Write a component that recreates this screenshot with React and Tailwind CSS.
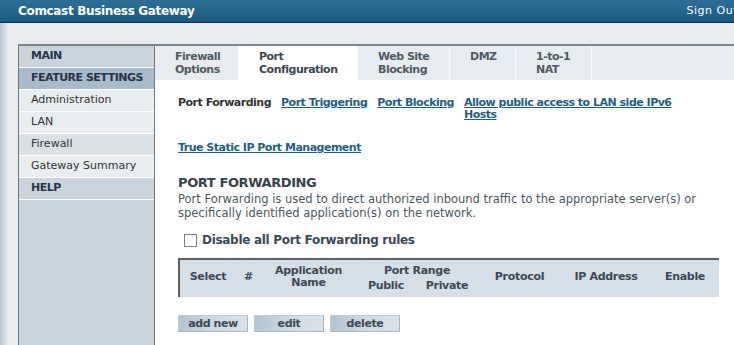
export default function App() {
  const sideRows = [
    { label: "MAIN", head: true, bg: "bg-[#c8d3db]" },
    { label: "FEATURE SETTINGS", head: true, bg: "bg-[#a8bbcb]" },
    { label: "Administration", bg: "bg-[#e8edf0]" },
    { label: "LAN", bg: "bg-[#e8edf0]" },
    { label: "Firewall", bg: "bg-[#d9e1e6]" },
    { label: "Gateway Summary", bg: "bg-[#e8edf0]" },
    { label: "HELP", head: true, bg: "bg-[#c8d3db]" },
  ];

  const tabs = [
    { a: "Firewall", b: "Options", w: "w-[84px]" },
    { a: "Port", b: "Configuration", w: "w-[119px]", active: true },
    { a: "Web Site", b: "Blocking", w: "w-[92px]" },
    { a: "DMZ", b: "", w: "w-[66px]" },
    { a: "1-to-1", b: "NAT", w: "w-[76px]" },
  ];

  return (
    <div className="w-[734px] h-[345px] overflow-hidden flex flex-col font-['DejaVu_Sans',Verdana,sans-serif] text-[11px] text-[#3d4954]">
      {/* top bar */}
      <div className="h-[23px] shrink-0 flex items-center justify-between pl-[18px] bg-gradient-to-b from-[#2c6f96] to-[#1b5a80] border-b border-[#10303f]">
        <span className="text-white font-bold text-[12px] tracking-[-0.33px]">Comcast Business Gateway</span>
        <span className="text-white text-[11px] mr-[-4px] tracking-[0.5px]">Sign Out</span>
      </div>

      <div className="flex flex-1 min-h-0">
        <div className="w-[18px] shrink-0 bg-gradient-to-r from-[#b8c7d0] via-[#e9eff1] to-[#e6ecef]" />

        <div className="flex-1 flex flex-col bg-[#e6ecef] pt-[21px]">
          <div className="flex flex-1 border-t-2 border-[#7c8589]">
            {/* sidebar */}
            <div className="w-[137px] shrink-0 flex flex-col bg-[#c8d3db] border-l border-r border-[#6f787d]">
              {sideRows.map((r) => (
                <div
                  key={r.label}
                  className={`h-[22px] flex items-center pl-[12px] border-b border-white ${r.bg} ${
                    r.head ? "font-bold text-[#26344a] tracking-[-0.5px]" : "text-[#333]"
                  }`}
                >
                  {r.label}
                </div>
              ))}
            </div>

            {/* content */}
            <div className="flex-1 flex flex-col bg-white">
              <div className="flex h-[34px] bg-[#e6ecef]">
                {tabs.map((t) => (
                  <div
                    key={t.a}
                    className={`${t.w} shrink-0 pl-[20px] pt-[4px] leading-[13px] font-bold tracking-[-0.5px] border-r border-[#f7f9fa] ${
                      t.active ? "bg-white text-[#3b4752]" : "text-[#4e5a64]"
                    }`}
                  >
                    <div>{t.a}</div>
                    <div>{t.b}</div>
                  </div>
                ))}
              </div>

              <div className="pl-[23px] pt-[17px]">
                <div className="flex items-start gap-[10px] leading-[12px] font-bold tracking-[-0.5px]">
                  <span className="text-[#333]">Port Forwarding</span>
                  <a className="text-[#1d5f8c] underline">Port Triggering</a>
                  <a className="text-[#1d5f8c] underline">Port Blocking</a>
                  <a className="text-[#1d5f8c] underline w-[212px]">Allow public access to LAN side IPv6 Hosts</a>
                </div>
                <div className="mt-[21px] leading-[12px] font-bold tracking-[-0.5px]">
                  <a className="text-[#1d5f8c] underline">True Static IP Port Management</a>
                </div>

                <div className="mt-[21px] text-[13px] font-bold tracking-[-0.4px] text-[#36424d] leading-[16px]">PORT FORWARDING</div>
                <div className="mt-[1px] leading-[14px] text-[11.5px] text-[#4c5761] w-[540px]">
                  Port Forwarding is used to direct authorized inbound traffic to the appropriate server(s) or specifically identified application(s) on the network.
                </div>

                <div className="mt-[11px] flex items-center pl-[6px] gap-[5px]">
                  <div className="w-[13px] h-[13px] border border-[#7b7f82] bg-white" />
                  <span className="font-bold text-[12px] tracking-[-0.3px] text-[#3d4954]">Disable all Port Forwarding rules</span>
                </div>

                <div className="mt-[9px] w-[541px] h-[39px] bg-[#d5dfe7] border-t-2 border-l-2 border-[#596167] grid grid-cols-[56px_25px_95px_60px_62px_83px_90px_68px] grid-rows-[17px_17px] font-bold tracking-[-0.3px] text-[#3d4954] text-center leading-[12px]">
                  <div className="row-span-2 flex items-center justify-center">Select</div>
                  <div className="row-span-2 flex items-center justify-center">#</div>
                  <div className="row-span-2 flex flex-col items-center justify-center">
                    <span>Application</span>
                    <span>Name</span>
                  </div>
                  <div className="col-span-2 flex items-end justify-center">Port Range</div>
                  <div className="row-span-2 flex items-center justify-center">Protocol</div>
                  <div className="row-span-2 flex items-center justify-center">IP Address</div>
                  <div className="row-span-2 flex items-center justify-center">Enable</div>
                  <div className="flex items-center justify-center">Public</div>
                  <div className="flex items-center justify-center">Private</div>
                </div>

                <div className="mt-[18px] flex gap-[6px]">
                  {["add new", "edit", "delete"].map((b) => (
                    <button
                      key={b}
                      className="w-[70px] h-[17px] leading-[15px] font-bold tracking-[-0.4px] text-[#3d4954] bg-gradient-to-r from-[#b3c3cf] via-[#cfd9e0] to-[#d9e2e8] border border-[#c2ced6] border-r-[#aab8c2] border-b-[#aab8c2]"
                    >
                      {b}
                    </button>
                  ))}
                </div>
              </div>
            </div>
          </div>
        </div>
      </div>
    </div>
  );
}
